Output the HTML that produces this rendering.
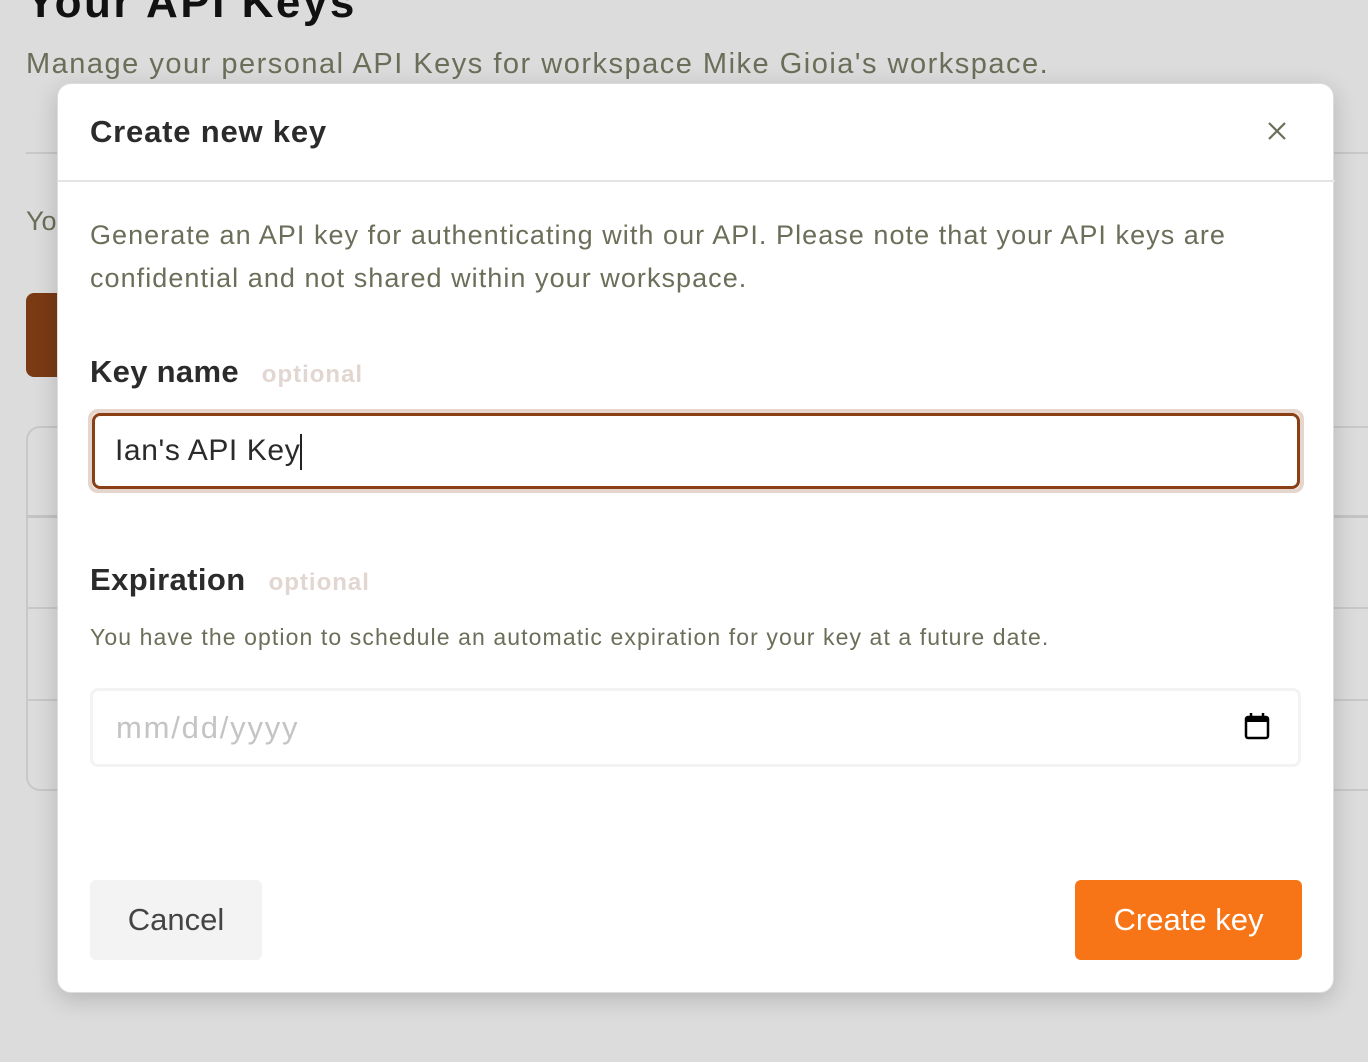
<!DOCTYPE html>
<html><head><style>
*{box-sizing:border-box;margin:0;padding:0}
body{width:1368px;height:1062px;background:#dcdcdc;font-family:"Liberation Sans",sans-serif;position:relative;overflow:hidden}
.abs{position:absolute}
.opt{font-size:24px;color:#e2d6d0;margin-left:14px;letter-spacing:1px;font-weight:bold}
</style></head><body>
<div class="abs" style="left:26px;top:-22px;font-size:44px;font-weight:bold;color:#111;letter-spacing:2.5px">Your API Keys</div>
<div class="abs" style="left:26px;top:48px;font-size:29px;color:#6b6e58;letter-spacing:1.5px">Manage your personal API Keys for workspace Mike Gioia's workspace.</div>
<div class="abs" style="left:26px;top:152px;width:1342px;height:2px;background:#c8c8c8"></div>
<div class="abs" style="left:26px;top:206px;font-size:27px;color:#6b6e58">You</div>
<div class="abs" style="left:26px;top:293px;width:80px;height:84px;background:#7a3a14;border-radius:8px"></div>
<div class="abs" style="left:26px;top:426px;width:1400px;height:365px;border:2px solid #c8c8c8;border-radius:14px"></div>
<div class="abs" style="left:26px;top:515px;width:1342px;height:3px;background:#c4c4c4"></div>
<div class="abs" style="left:26px;top:607px;width:1342px;height:2px;background:#c8c8c8"></div>
<div class="abs" style="left:26px;top:699px;width:1342px;height:2px;background:#c8c8c8"></div>

<div class="abs" style="left:57px;top:83px;width:1277px;height:910px;background:#fff;border-radius:14px;box-shadow:0 6px 24px rgba(0,0,0,.18);border:1px solid #ddd">
 <div class="abs" style="left:32px;top:30px;font-size:31px;font-weight:bold;color:#2b2b2b;letter-spacing:0.8px">Create new key</div>
 <svg class="abs" style="left:1209px;top:37px" width="20" height="20" viewBox="0 0 20 20"><path d="M2 2L18 18M18 2L2 18" stroke="#6b6e58" stroke-width="2.2"/></svg>
 <div class="abs" style="left:0;top:96px;width:1277px;height:2px;background:#e4e4e4"></div>
 <div class="abs" style="left:32px;top:130px;width:1200px;font-size:27px;line-height:43px;color:#6b6e58;letter-spacing:1.05px">Generate an API key for authenticating with our API. Please note that your API keys are confidential and not shared within your workspace.</div>
 <div class="abs" style="left:32px;top:270px;font-size:31px;font-weight:bold;color:#2b2b2b;letter-spacing:0.3px">Key name <span class="opt">optional</span></div>
 <div class="abs" style="left:30px;top:325px;width:1216px;height:84px;border-radius:10px;border:4px solid #e6d5cc">
  <div style="width:100%;height:100%;border:3px solid #8a3f14;border-radius:8px;padding-left:20px;font-size:30px;line-height:70px;color:#2b2b2b;letter-spacing:0.6px">Ian's API Key<span style="display:inline-block;width:2px;height:36px;background:#222;vertical-align:middle"></span></div>
 </div>
 <div class="abs" style="left:32px;top:478px;font-size:31px;font-weight:bold;color:#2b2b2b;letter-spacing:0.4px">Expiration <span class="opt">optional</span></div>
 <div class="abs" style="left:32px;top:540px;font-size:23px;color:#6b6e58;letter-spacing:1.1px">You have the option to schedule an automatic expiration for your key at a future date.</div>
 <div class="abs" style="left:32px;top:604px;width:1211px;height:79px;border:3px solid #f3f3f1;border-radius:8px;padding-left:23px;font-size:31px;line-height:73px;color:#c4c4c4;letter-spacing:1.8px">mm/dd/yyyy</div>
 <svg class="abs" style="left:1186px;top:628px" width="26" height="28" viewBox="0 0 26 28"><rect x="2" y="5" width="22" height="21" rx="2" fill="none" stroke="#000" stroke-width="2.5"/><rect x="2" y="5" width="22" height="5" fill="#000"/><path d="M7 1v6M19 1v6" stroke="#000" stroke-width="2.5"/></svg>
 <div class="abs" style="left:32px;top:796px;width:172px;height:80px;background:#f3f3f3;border-radius:6px;font-size:31px;line-height:80px;text-align:center;color:#444">Cancel</div>
 <div class="abs" style="left:1017px;top:796px;width:227px;height:80px;background:#f77517;border-radius:6px;font-size:31px;line-height:80px;text-align:center;color:#fff">Create key</div>
</div>
</body></html>
